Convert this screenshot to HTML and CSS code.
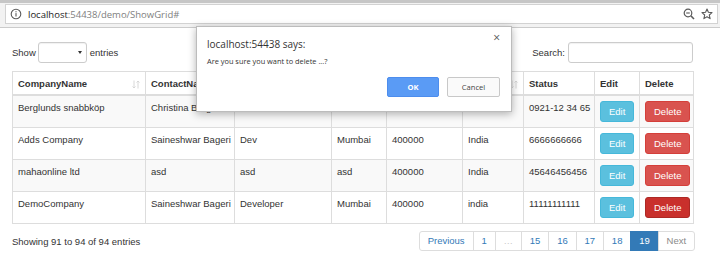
FILE: index.html
```html
<!DOCTYPE html>
<html lang="en">
<head>
    <meta charset="UTF-8">
    <meta name="viewport" content="width=device-width, initial-scale=1.0">
    <title>ShowGrid</title>
    <link rel="stylesheet" href="styles.css">
</head>
<body>
    <div class="toolbar">
        <div class="omnibox">
            <svg class="info-icon" width="12" height="12" viewBox="0 0 12 12"><circle cx="6" cy="6" r="4.8" fill="none" stroke="#5a5a5a" stroke-width="1.1"/><rect x="5.45" y="5.1" width="1.1" height="3.4" fill="#5a5a5a"/><rect x="5.45" y="3.2" width="1.1" height="1.1" fill="#5a5a5a"/></svg>
            <span class="url"><span class="host">localhost</span>:54438/demo/ShowGrid#</span>
            <span class="omni-icons">
                <svg width="12" height="12" viewBox="0 0 12 12"><circle cx="5" cy="5" r="3.8" fill="none" stroke="#5a5a5a" stroke-width="1.2"/><line x1="3.2" y1="5" x2="6.8" y2="5" stroke="#5a5a5a" stroke-width="1.1"/><line x1="7.8" y1="7.8" x2="11" y2="11" stroke="#5a5a5a" stroke-width="1.6"/></svg>
                <svg width="12" height="12" viewBox="0 0 12 12"><polygon points="6,1 7.4,4.3 11,4.6 8.3,7 9.1,10.6 6,8.7 2.9,10.6 3.7,7 1,4.6 4.6,4.3" fill="none" stroke="#5a5a5a" stroke-width="1.1" stroke-linejoin="round"/></svg>
            </span>
        </div>
    </div>

    <div class="page">
        <div class="dt-top">
            <div class="dt-length">Show <span class="select-box"><span class="caret"></span></span> entries</div>
            <div class="dt-search">Search: <span class="search-input"></span></div>
        </div>

        <table class="grid">
            <colgroup>
                <col style="width: 133px">
                <col style="width: 89px">
                <col style="width: 97px">
                <col style="width: 55px">
                <col style="width: 76px">
                <col style="width: 61px">
                <col style="width: 71px">
                <col style="width: 45px">
                <col style="width: 54px">
            </colgroup>
            <thead>
                <tr>
                    <th>CompanyName<svg class="sort" width="8" height="9" viewBox="0 0 8 9"><path d="M2 0.5V8M0.5 6.5L2 8L3.5 6.5M6 8.5V1M4.5 2.5L6 1L7.5 2.5" fill="none" stroke="#d4d4d4" stroke-width="0.9"/></svg></th>
                    <th>ContactName<svg class="sort" width="8" height="9" viewBox="0 0 8 9"><path d="M2 0.5V8M0.5 6.5L2 8L3.5 6.5M6 8.5V1M4.5 2.5L6 1L7.5 2.5" fill="none" stroke="#d4d4d4" stroke-width="0.9"/></svg></th>
                    <th>ContactTitle</th>
                    <th>City</th>
                    <th>PostalCode</th>
                    <th>Country<svg class="sort" width="8" height="9" viewBox="0 0 8 9"><path d="M2 0.5V8M0.5 6.5L2 8L3.5 6.5M6 8.5V1M4.5 2.5L6 1L7.5 2.5" fill="none" stroke="#d4d4d4" stroke-width="0.9"/></svg></th>
                    <th>Status</th>
                    <th>Edit</th>
                    <th>Delete</th>
                </tr>
            </thead>
            <tbody>
                <tr class="odd">
                    <td>Berglunds snabbköp</td>
                    <td>Christina Berglund</td>
                    <td></td>
                    <td></td>
                    <td></td>
                    <td></td>
                    <td>0921-12 34 65</td>
                    <td><a class="btn btn-info">Edit</a></td>
                    <td><a class="btn btn-danger">Delete</a></td>
                </tr>
                <tr>
                    <td>Adds Company</td>
                    <td>Saineshwar Bageri</td>
                    <td>Dev</td>
                    <td>Mumbai</td>
                    <td>400000</td>
                    <td>India</td>
                    <td>6666666666</td>
                    <td><a class="btn btn-info">Edit</a></td>
                    <td><a class="btn btn-danger">Delete</a></td>
                </tr>
                <tr class="odd">
                    <td>mahaonline ltd</td>
                    <td>asd</td>
                    <td>asd</td>
                    <td>asd</td>
                    <td>400000</td>
                    <td>India</td>
                    <td>45646456456</td>
                    <td><a class="btn btn-info">Edit</a></td>
                    <td><a class="btn btn-danger">Delete</a></td>
                </tr>
                <tr>
                    <td>DemoCompany</td>
                    <td>Saineshwar Bageri</td>
                    <td>Developer</td>
                    <td>Mumbai</td>
                    <td>400000</td>
                    <td>india</td>
                    <td>11111111111</td>
                    <td><a class="btn btn-info">Edit</a></td>
                    <td><a class="btn btn-danger active">Delete</a></td>
                </tr>
            </tbody>
        </table>

        <div class="dt-bottom">
            <div class="dt-info">Showing 91 to 94 of 94 entries</div>
            <ul class="pagination">
                <li><a>Previous</a></li>
                <li><a>1</a></li>
                <li class="disabled ellipsis"><a>…</a></li>
                <li><a>15</a></li>
                <li><a>16</a></li>
                <li><a>17</a></li>
                <li><a>18</a></li>
                <li class="current"><a>19</a></li>
                <li class="disabled"><a>Next</a></li>
            </ul>
        </div>
    </div>

    <!-- confirm('Are you sure you want to delete ...?') -->
    <div class="dialog">
        <div class="dialog-head">
            <span class="dialog-title">localhost:54438 says:</span>
            <span class="dialog-close">×</span>
        </div>
        <div class="dialog-msg">Are you sure you want to delete ...?</div>
        <div class="dialog-buttons">
            <button class="dlg-btn dlg-ok">OK</button>
            <button class="dlg-btn dlg-cancel">Cancel</button>
        </div>
    </div>
</body>
</html>
```

FILE: styles.css
```css
body { margin: 0; font-family: "Liberation Sans", Arial, sans-serif; font-size: 9.5px; color: #333; background: #fff; }

/* browser bar */
.toolbar { background: #f2f2f2; border-top: 3px solid #c6c6c6; border-bottom: 1px solid #cbcbcb; padding: 1px 2px 3px 5px; }
.omnibox { display: flex; align-items: center; height: 18px; background: #fff; border: 1px solid #d2d2d2; padding: 0 4px; font-family: "Open Sans", sans-serif; font-size: 9.5px; color: #808080; }
.info-icon { margin-right: 6px; }
.host { color: #222; }
.omni-icons { margin-left: auto; display: flex; gap: 6px; }

/* page */
.page { padding: 14px 27px 0 12px; }
.dt-top { display: flex; justify-content: space-between; align-items: center; height: 21px; margin-bottom: 8px; }
.dt-length, .dt-search { display: flex; align-items: center; }
.select-box { display: inline-block; position: relative; width: 47px; height: 19px; margin: 0 3px 0 2px; border: 1px solid #ccc; border-radius: 3px; background: #fff; box-shadow: inset 0 1px 1px rgba(0,0,0,.06); }
.caret { position: absolute; right: 4px; top: 8px; border-left: 2.5px solid transparent; border-right: 2.5px solid transparent; border-top: 3.5px solid #333; }
.search-input { display: inline-block; width: 123px; height: 19px; margin-left: 3px; border: 1px solid #ccc; border-radius: 3px; background: #fff; box-shadow: inset 0 1px 1px rgba(0,0,0,.06); }

/* grid */
.grid { width: 681px; table-layout: fixed; border-collapse: collapse; border: 1px solid #ddd; }
.grid th, .grid td { border: 1px solid #ddd; padding: 5px 5px 5px; line-height: 13px; text-align: left; vertical-align: top; white-space: nowrap; overflow: hidden; }
.grid th { font-weight: bold; padding: 5px 5px 4px; border-bottom: 2px solid #ddd; color: #333; }
.grid tr.odd td { background: #f9f9f9; }
.sort { float: right; margin-top: 3px; }

.btn { display: inline-block; height: 21px; line-height: 19px; padding: 0 8px; box-sizing: border-box; border: 1px solid; border-radius: 3px; color: #fff; font-size: 9.5px; }
.btn-info { background: #5bc0de; border-color: #46b8da; }
.btn-danger { background: #d9534f; border-color: #d43f3a; }
.btn-danger.active { background: #c9302c; border-color: #ac2925; }

.dt-bottom { display: flex; justify-content: space-between; align-items: center; margin-top: 7px; }
.pagination { display: flex; list-style: none; margin: 0 -2px 0 0; padding: 0; }
.pagination a { display: block; height: 18px; line-height: 18px; padding: 0 7.9px; border: 1px solid #ddd; margin-left: -1px; color: #337ab7; background: #fff; }
.pagination li:first-child a { border-radius: 3px 0 0 3px; }
.pagination li:last-child a { border-radius: 0 3px 3px 0; }
.pagination .disabled a { color: #8a8a8a; }
.pagination .ellipsis a { color: #c8c8c8; }
.pagination .current a { background: #337ab7; border-color: #337ab7; color: #fff; }

/* confirm dialog */
.dialog { position: absolute; left: 196px; top: 26px; width: 316px; height: 86px; box-sizing: border-box; padding: 8px 11px 0 10px; background: #fff; border: 1px solid #bcbcbc; box-shadow: 0 2px 8px rgba(0,0,0,.3); font-family: "Open Sans", sans-serif; color: #333; }
.dialog-head { display: flex; justify-content: space-between; align-items: flex-start; }
.dialog-title { font-size: 10px; line-height: 18px; }
.dialog-close { font-size: 12px; line-height: 12px; color: #555; margin-top: -3px; }
.dialog-msg { font-size: 7.4px; line-height: 10px; margin-top: 3px; }
.dialog-buttons { display: flex; justify-content: flex-end; gap: 8px; margin-top: 11px; }
.dlg-btn { width: 52px; height: 20px; padding: 0; font-family: "Open Sans", sans-serif; font-size: 7.6px; border-radius: 2px; }
.dlg-ok { background: #5a9bf5; border: 1px solid #4d8ded; color: #fff; font-weight: bold; }
.dlg-cancel { width: 53px; background: #fafafa; border: 1px solid #c8c8c8; color: #444; }
```
